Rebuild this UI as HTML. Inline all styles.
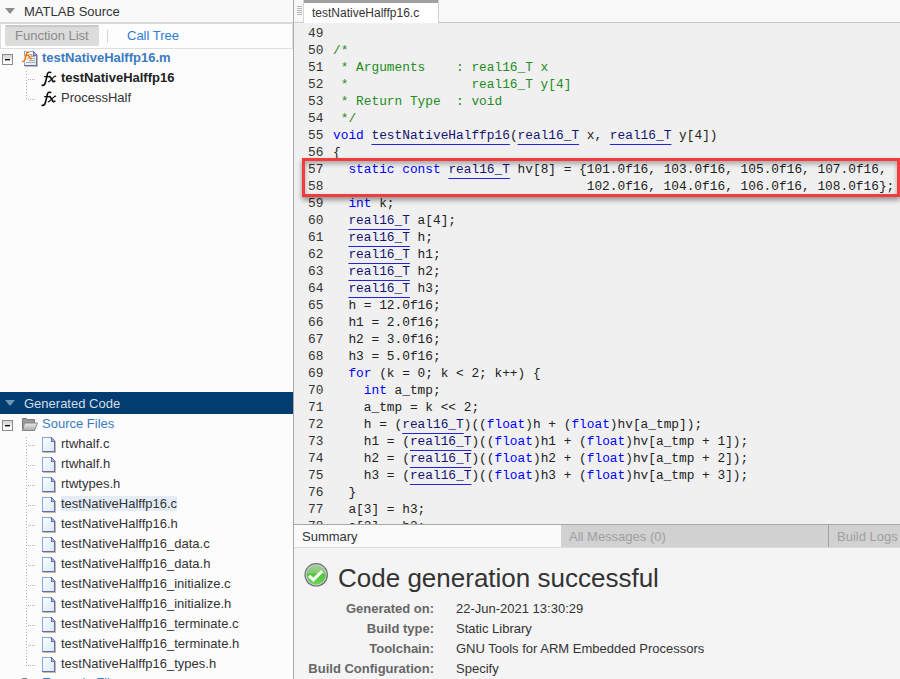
<!DOCTYPE html>
<html><head><meta charset="utf-8">
<style>
*{margin:0;padding:0;box-sizing:border-box}
html,body{width:900px;height:679px;overflow:hidden;background:#fff}
body{position:relative;font-family:"Liberation Sans",sans-serif;font-size:13px;color:#333}
.abs{position:absolute}
svg{position:absolute;overflow:visible}
#left{position:absolute;left:0;top:0;width:293px;height:679px;background:#fcfcfc;overflow:hidden}
#vsep{position:absolute;left:293px;top:0;width:1px;height:679px;background:#a9a9a9}
.tri{position:absolute;width:0;height:0;border-left:5px solid transparent;border-right:5px solid transparent;border-top:6px solid #8c8c8c}
.t13{position:absolute;white-space:nowrap;font-size:13px;line-height:20px;height:20px}
.b{font-weight:bold}
.lnk{color:#3a7bc0}
.box{position:absolute;width:11px;height:11px;border:1px solid #8a8a8a;background:linear-gradient(#d6d6d6 0,#e4e4e4 45%,#fff 55%,#fff 100%)}
.box:after{content:"";position:absolute;left:2px;top:4px;width:5px;height:1px;background:#000;box-shadow:0 1px 0 rgba(0,0,0,0.35)}
.dv{position:absolute;width:1px;background:repeating-linear-gradient(#b0b0b0 0 1px,transparent 1px 3px)}
.dh{position:absolute;height:1px;background:repeating-linear-gradient(90deg,#b0b0b0 0 1px,transparent 1px 2px)}
.fx{position:absolute;font-family:"Liberation Serif",serif;font-style:italic;font-size:17px;line-height:20px;color:#111;white-space:nowrap}
#right{position:absolute;left:294px;top:0;width:606px;height:679px;background:#f0f0f0}
#code{position:absolute;left:294px;top:23px;width:606px;height:501px;background:#f0f0f0;overflow:hidden}
.cl{position:absolute;left:0;height:17px;line-height:17px;font-family:"Liberation Mono",monospace;font-size:12.82px;white-space:pre;color:#222}
.ln{position:absolute;left:14px;color:#333}
.cx{position:absolute;left:39px}
.kw{color:#0000ff}
.cm{color:#228b22}
.ty{color:#131370;text-decoration:underline;text-decoration-color:#2323dd;text-underline-offset:5px}
.lbl{position:absolute;white-space:nowrap;font-weight:bold;color:#666;text-align:right;width:200px;line-height:20px}
.val{position:absolute;white-space:nowrap;color:#333;line-height:20px}
</style></head><body>
<svg width="0" height="0" style="position:absolute">
 <defs>
  <linearGradient id="pg" x1="0" y1="0" x2="1" y2="1"><stop offset="0" stop-color="#ffffff"/><stop offset="1" stop-color="#d6e9fa"/></linearGradient>
  <linearGradient id="fg" x1="0" y1="0" x2="0" y2="1"><stop offset="0" stop-color="#ececec"/><stop offset="1" stop-color="#a8a8a8"/></linearGradient>
  <linearGradient id="cg" x1="0" y1="0" x2="0" y2="1"><stop offset="0" stop-color="#9fcf92"/><stop offset="0.42" stop-color="#86c874"/><stop offset="0.45" stop-color="#4cc23a"/><stop offset="1" stop-color="#66d64e"/></linearGradient>
  <g id="page" shape-rendering="crispEdges">
   <path d="M14 5h1v12h-13v-1h12z" fill="#bdbda6"/>
   <path d="M1 1h9v4h4v11h-13z" fill="url(#pg)"/>
   <rect x="1" y="1" width="1" height="15" fill="#86a6e0"/>
   <rect x="1" y="1" width="10" height="1" fill="#86a6e0"/>
   <rect x="13" y="5" width="1" height="11" fill="#6b6bac"/>
   <rect x="1" y="15" width="13" height="1" fill="#6b6bac"/>
   <rect x="10" y="1" width="1" height="5" fill="#6b6bac"/>
   <rect x="10" y="5" width="4" height="1" fill="#6b6bac"/>
   <rect x="11" y="2" width="1" height="1" fill="#6b6bac"/>
   <rect x="12" y="3" width="1" height="1" fill="#6b6bac"/>
   <rect x="13" y="4" width="1" height="1" fill="#6b6bac"/>
   <rect x="11" y="3" width="1" height="2" fill="#9fc2ee"/>
   <rect x="12" y="4" width="1" height="1" fill="#9fc2ee"/>
  </g>
  <g id="fxs" fill="none" stroke-linecap="round">
   <path d="M12.7 4.5C11.5 3.9 10.2 4.2 9.6 5.6C9 7.5 8.3 11.5 7.4 14.5C7 16.2 6 17.6 4.2 17.4"/>
   <path d="M6.6 8.6H10.4" stroke-width="1.1"/>
   <path d="M10.9 8.7C11.7 8.3 12.2 8.6 12.6 9.4L14.7 13C15.1 13.7 15.8 13.8 16.8 13.1"/>
   <path d="M17.7 8.3C17.2 8.1 16.6 8.3 16 8.9L11.4 13.3C11.1 13.7 10.8 13.8 10.4 13.7" stroke-width="1.2"/>
  </g>
 </defs>
</svg>
<div id="left">
  <div class="abs" style="left:0;top:0;width:293px;height:22px;background:#f9f9f9"></div>
  <div class="tri" style="left:5px;top:8px"></div>
  <div class="t13" style="left:24px;top:2px;color:#333">MATLAB Source</div>
  <div class="abs" style="left:0;top:22px;width:293px;height:2px;background:#dadada"></div>
  <div class="abs" style="left:0;top:24px;width:293px;height:24px;background:#fdfdfd"></div>
  <div class="abs" style="left:0;top:24px;width:1px;height:24px;background:#dedede"></div>
  <div class="abs" style="left:292px;top:24px;width:1px;height:24px;background:#e2e2e2"></div>
  <div class="abs" style="left:0;top:48px;width:293px;height:1px;background:#dedede"></div>
  <div class="abs" style="left:5px;top:25px;width:94px;height:21px;background:#dcdcdc;border-radius:2px;border-top:2px solid #c9c9c9"></div>
  <div class="t13" style="left:15px;top:26px;color:#8a8a8a">Function List</div>
  <div class="abs" style="left:107px;top:30px;width:1px;height:13px;background:#d4d4d4"></div>
  <div class="t13" style="left:127px;top:26px;color:#2f7bd6">Call Tree</div>

  <!-- MATLAB source tree -->
  <div class="box" style="left:2px;top:54px"></div>
  <svg style="left:23px;top:50px" width="16" height="18" viewBox="0 0 16 18">
   <use href="#page"/>
   <g fill="#a8a8a8"><rect x="6" y="4" width="3" height="1"/><rect x="8" y="6" width="4" height="1"/><rect x="8" y="8" width="4" height="1"/><rect x="6" y="10" width="6" height="1"/><rect x="3" y="12" width="9" height="1"/></g>
  </svg>
  <svg style="left:0;top:0" width="40" height="70" viewBox="0 0 40 70"><g transform="translate(19.9,49.3) scale(0.7)"><use href="#fxs" stroke="#ffffff" stroke-width="3.6" opacity="0.8"/><use href="#fxs" stroke="#e8730c" stroke-width="2.1"/></g></svg>
  <div class="t13 b lnk" style="left:42px;top:48px">testNativeHalffp16.m</div>
  <div class="dv" style="left:26px;top:71px;height:29px"></div>
  <div class="dh" style="left:28px;top:79px;width:8px"></div>
  <div class="dh" style="left:28px;top:99px;width:8px"></div>
  <svg style="left:38px;top:68px" width="24" height="24" viewBox="0 0 24 24"><use href="#fxs" stroke="#111" stroke-width="1.65"/></svg>
  <div class="t13 b" style="left:61px;top:68px;color:#222">testNativeHalffp16</div>
  <svg style="left:38px;top:88px" width="24" height="24" viewBox="0 0 24 24"><use href="#fxs" stroke="#111" stroke-width="1.65"/></svg>
  <div class="t13" style="left:61px;top:88px">ProcessHalf</div>

  <!-- Generated code -->
  <div class="abs" style="left:0;top:392px;width:293px;height:22px;background:#023d71"></div>
  <div class="tri" style="left:5px;top:400px;border-top-color:#6d98b5"></div>
  <div class="t13" style="left:24px;top:394px;color:#d3dde8">Generated Code</div>
  <div class="box" style="left:2px;top:420px"></div>
  <svg style="left:21px;top:417px" width="18" height="15" viewBox="0 0 18 15">
   <path d="M1.5 13.5V1.5H5.5L6.5 2.5H13.5V13.5z" fill="#9a9a9a" stroke="#7a7a7a" stroke-width="1"/>
   <path d="M1.5 13.5L3.5 6H16.5L13.5 13.5z" fill="url(#fg)" stroke="#888" stroke-width="1" stroke-linejoin="round"/>
  </svg>
  <div class="t13 lnk" style="left:42px;top:414px">Source Files</div>
  <div class="dv" style="left:26px;top:437px;height:229px"></div>
<div class="dh" style="left:28px;top:445px;width:8px"></div>
<svg style="left:41px;top:436px" width="16" height="18" viewBox="0 0 16 18"><use href="#page"/></svg>
<div class="t13" style="left:61px;top:434px">rtwhalf.c</div>
<div class="dh" style="left:28px;top:465px;width:8px"></div>
<svg style="left:41px;top:456px" width="16" height="18" viewBox="0 0 16 18"><use href="#page"/></svg>
<div class="t13" style="left:61px;top:454px">rtwhalf.h</div>
<div class="dh" style="left:28px;top:485px;width:8px"></div>
<svg style="left:41px;top:476px" width="16" height="18" viewBox="0 0 16 18"><use href="#page"/></svg>
<div class="t13" style="left:61px;top:474px">rtwtypes.h</div>
<div class="abs" style="left:61px;top:496px;width:116px;height:15px;background:#e4ecf7"></div>
<div class="dh" style="left:28px;top:505px;width:8px"></div>
<svg style="left:41px;top:496px" width="16" height="18" viewBox="0 0 16 18"><use href="#page"/></svg>
<div class="t13" style="left:61px;top:494px">testNativeHalffp16.c</div>
<div class="dh" style="left:28px;top:525px;width:8px"></div>
<svg style="left:41px;top:516px" width="16" height="18" viewBox="0 0 16 18"><use href="#page"/></svg>
<div class="t13" style="left:61px;top:514px">testNativeHalffp16.h</div>
<div class="dh" style="left:28px;top:545px;width:8px"></div>
<svg style="left:41px;top:536px" width="16" height="18" viewBox="0 0 16 18"><use href="#page"/></svg>
<div class="t13" style="left:61px;top:534px">testNativeHalffp16_data.c</div>
<div class="dh" style="left:28px;top:565px;width:8px"></div>
<svg style="left:41px;top:556px" width="16" height="18" viewBox="0 0 16 18"><use href="#page"/></svg>
<div class="t13" style="left:61px;top:554px">testNativeHalffp16_data.h</div>
<div class="dh" style="left:28px;top:585px;width:8px"></div>
<svg style="left:41px;top:576px" width="16" height="18" viewBox="0 0 16 18"><use href="#page"/></svg>
<div class="t13" style="left:61px;top:574px">testNativeHalffp16_initialize.c</div>
<div class="dh" style="left:28px;top:605px;width:8px"></div>
<svg style="left:41px;top:596px" width="16" height="18" viewBox="0 0 16 18"><use href="#page"/></svg>
<div class="t13" style="left:61px;top:594px">testNativeHalffp16_initialize.h</div>
<div class="dh" style="left:28px;top:625px;width:8px"></div>
<svg style="left:41px;top:616px" width="16" height="18" viewBox="0 0 16 18"><use href="#page"/></svg>
<div class="t13" style="left:61px;top:614px">testNativeHalffp16_terminate.c</div>
<div class="dh" style="left:28px;top:645px;width:8px"></div>
<svg style="left:41px;top:636px" width="16" height="18" viewBox="0 0 16 18"><use href="#page"/></svg>
<div class="t13" style="left:61px;top:634px">testNativeHalffp16_terminate.h</div>
<div class="dh" style="left:28px;top:665px;width:8px"></div>
<svg style="left:41px;top:656px" width="16" height="18" viewBox="0 0 16 18"><use href="#page"/></svg>
<div class="t13" style="left:61px;top:654px">testNativeHalffp16_types.h</div>
  <svg style="left:21px;top:677px" width="18" height="15" viewBox="0 0 18 15"><path d="M1.5 13.5V1.5H5.5L6.5 2.5H13.5V13.5z" fill="#9a9a9a" stroke="#7a7a7a" stroke-width="1"/></svg>
  <div class="t13 lnk" style="left:42px;top:673px">Example Files</div>
</div>
<div id="vsep"></div>
<div id="right">
  <div class="abs" style="left:0;top:0;width:606px;height:23px;background:#f9f9f9;border-bottom:1px solid #c4c4c4"></div>
  <div class="abs" style="left:0;top:0;width:10px;height:23px;background:#f7f7f7;border-right:1px solid #d6d6d6;border-bottom:1px solid #cdcdcd"></div>
  <div class="abs" style="left:3px;top:6px;width:5px;height:9px;background:repeating-linear-gradient(#b8b8b8 0 1px,transparent 1px 2px)"></div>
  <div class="abs" style="left:10px;top:0;width:134px;height:23px;background:#fff;border-top:3px solid #a0a0a0"></div>
  <div class="abs" style="left:144px;top:0;width:1px;height:22px;background:#d0d0d0"></div>
  <div class="t13" style="left:18px;top:3px;color:#333;font-size:12px">testNativeHalffp16.c</div>
</div>
<div id="code">
<div class="cl" style="top:2px"><span class="ln">49</span><span class="cx"></span></div>
<div class="cl" style="top:19px"><span class="ln">50</span><span class="cx"><span class="cm">/*</span></span></div>
<div class="cl" style="top:36px"><span class="ln">51</span><span class="cx"><span class="cm"> * Arguments    : real16_T x</span></span></div>
<div class="cl" style="top:53px"><span class="ln">52</span><span class="cx"><span class="cm"> *                real16_T y[4]</span></span></div>
<div class="cl" style="top:70px"><span class="ln">53</span><span class="cx"><span class="cm"> * Return Type  : void</span></span></div>
<div class="cl" style="top:87px"><span class="ln">54</span><span class="cx"><span class="cm"> */</span></span></div>
<div class="cl" style="top:104px"><span class="ln">55</span><span class="cx"><span class="kw">void</span> <span class="ty">testNativeHalffp16</span>(<span class="ty">real16_T</span> x, <span class="ty">real16_T</span> y[4])</span></div>
<div class="cl" style="top:121px"><span class="ln">56</span><span class="cx">{</span></div>
<div class="cl" style="top:138px"><span class="ln">57</span><span class="cx">  <span class="kw">static</span> <span class="kw">const</span> <span class="ty">real16_T</span> hv[8] = {101.0f16, 103.0f16, 105.0f16, 107.0f16,</span></div>
<div class="cl" style="top:155px"><span class="ln">58</span><span class="cx">                                 102.0f16, 104.0f16, 106.0f16, 108.0f16};</span></div>
<div class="cl" style="top:172px"><span class="ln">59</span><span class="cx">  <span class="kw">int</span> k;</span></div>
<div class="cl" style="top:189px"><span class="ln">60</span><span class="cx">  <span class="ty">real16_T</span> a[4];</span></div>
<div class="cl" style="top:206px"><span class="ln">61</span><span class="cx">  <span class="ty">real16_T</span> h;</span></div>
<div class="cl" style="top:223px"><span class="ln">62</span><span class="cx">  <span class="ty">real16_T</span> h1;</span></div>
<div class="cl" style="top:240px"><span class="ln">63</span><span class="cx">  <span class="ty">real16_T</span> h2;</span></div>
<div class="cl" style="top:257px"><span class="ln">64</span><span class="cx">  <span class="ty">real16_T</span> h3;</span></div>
<div class="cl" style="top:274px"><span class="ln">65</span><span class="cx">  h = 12.0f16;</span></div>
<div class="cl" style="top:291px"><span class="ln">66</span><span class="cx">  h1 = 2.0f16;</span></div>
<div class="cl" style="top:308px"><span class="ln">67</span><span class="cx">  h2 = 3.0f16;</span></div>
<div class="cl" style="top:325px"><span class="ln">68</span><span class="cx">  h3 = 5.0f16;</span></div>
<div class="cl" style="top:342px"><span class="ln">69</span><span class="cx">  <span class="kw">for</span> (k = 0; k &lt; 2; k++) {</span></div>
<div class="cl" style="top:359px"><span class="ln">70</span><span class="cx">    <span class="kw">int</span> a_tmp;</span></div>
<div class="cl" style="top:376px"><span class="ln">71</span><span class="cx">    a_tmp = k &lt;&lt; 2;</span></div>
<div class="cl" style="top:393px"><span class="ln">72</span><span class="cx">    h = (<span class="ty">real16_T</span>)((<span class="kw">float</span>)h + (<span class="kw">float</span>)hv[a_tmp]);</span></div>
<div class="cl" style="top:410px"><span class="ln">73</span><span class="cx">    h1 = (<span class="ty">real16_T</span>)((<span class="kw">float</span>)h1 + (<span class="kw">float</span>)hv[a_tmp + 1]);</span></div>
<div class="cl" style="top:427px"><span class="ln">74</span><span class="cx">    h2 = (<span class="ty">real16_T</span>)((<span class="kw">float</span>)h2 + (<span class="kw">float</span>)hv[a_tmp + 2]);</span></div>
<div class="cl" style="top:444px"><span class="ln">75</span><span class="cx">    h3 = (<span class="ty">real16_T</span>)((<span class="kw">float</span>)h3 + (<span class="kw">float</span>)hv[a_tmp + 3]);</span></div>
<div class="cl" style="top:461px"><span class="ln">76</span><span class="cx">  }</span></div>
<div class="cl" style="top:478px"><span class="ln">77</span><span class="cx">  a[3] = h3;</span></div>
<div class="cl" style="top:495px"><span class="ln">78</span><span class="cx">  a[2] = h2;</span></div>
</div>
<!-- red annotation box -->
<div class="abs" style="left:302px;top:158px;width:598px;height:39px;border:3px solid #f33b3b;box-shadow:0 3px 5px rgba(0,0,0,0.4), inset 0 3px 5px rgba(0,0,0,0.3)"></div>
<!-- summary pane -->
<div class="abs" style="left:294px;top:524px;width:606px;height:155px;background:#f4f4f4"></div>
<div class="abs" style="left:294px;top:524px;width:606px;height:1px;background:#a8a8a8"></div>
<div class="abs" style="left:294px;top:525px;width:267px;height:22px;background:#fafafa"></div>
<div class="abs" style="left:561px;top:525px;width:339px;height:22px;background:#d1d1d1"></div>
<div class="abs" style="left:828px;top:525px;width:1px;height:22px;background:#a3a3a3"></div>
<div class="abs" style="left:294px;top:547px;width:606px;height:1px;background:#dcdcdc"></div>
<div class="t13" style="left:302px;top:527px;color:#333">Summary</div>
<div class="t13" style="left:569px;top:527px;color:#a0a0a0">All Messages (0)</div>
<div class="t13" style="left:837px;top:527px;color:#a0a0a0">Build Logs</div>
<svg style="left:304px;top:563px" width="24" height="24" viewBox="0 0 24 24">
 <circle cx="12.2" cy="11.8" r="11.8" fill="#6e6e6e"/>
 <circle cx="12.2" cy="11.8" r="10.6" fill="#c9cfd4"/>
 <circle cx="12.2" cy="11.8" r="9.6" fill="url(#cg)"/>
 <path d="M5 12.8l4.3 3.9l9 -8.6" fill="none" stroke="#f2fbee" stroke-width="3.2"/>
</svg>
<div class="abs" style="left:338px;top:562px;font-size:26px;line-height:32px;color:#333;white-space:nowrap">Code generation successful</div>
<div class="lbl" style="left:234px;top:599px">Generated on:</div>
<div class="lbl" style="left:234px;top:619px">Build type:</div>
<div class="lbl" style="left:234px;top:639px">Toolchain:</div>
<div class="lbl" style="left:234px;top:659px">Build Configuration:</div>
<div class="val" style="left:456px;top:599px">22-Jun-2021 13:30:29</div>
<div class="val" style="left:456px;top:619px">Static Library</div>
<div class="val" style="left:456px;top:639px">GNU Tools for ARM Embedded Processors</div>
<div class="val" style="left:456px;top:659px">Specify</div>
</body></html>
